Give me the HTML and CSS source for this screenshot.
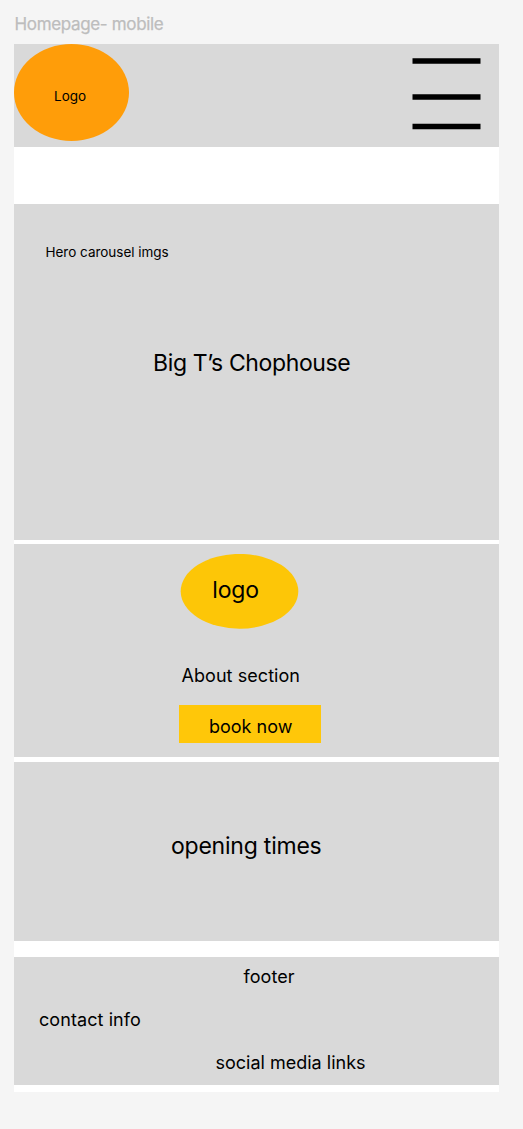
FILE: index.html
```html
<!DOCTYPE html>
<html lang="en">
<head>
<meta charset="utf-8">
<title>Homepage - mobile</title>
<link rel="stylesheet" href="styles.css">
</head>
<body>
<div class="frame-label">Homepage- mobile</div>
<main class="frame">
  <header class="header">
    <div class="logo"><span>Logo</span></div>
    <svg class="menu" width="69" height="74" viewBox="0 0 69 74"><path d="M0.5 3H68.5M0.5 39H68.5M0.5 68.5H68.5" stroke="#000" stroke-width="5.5"/></svg>
  </header>
  <section class="hero">
    <p class="hero-note">Hero carousel imgs</p>
    <h1 class="hero-title">Big T’s Chophouse</h1>
  </section>
  <section class="about">
    <svg class="badge" width="119" height="76" viewBox="0 0 119 76"><ellipse cx="59.5" cy="37.3" rx="58.8" ry="37.4" fill="#fdc607"/><text class="badge-text" x="32.3" y="44">logo</text></svg>
    <p class="about-text">About section</p>
    <button class="book"><span>book now</span></button>
  </section>
  <section class="times"><h2 class="times-title">opening times</h2></section>
  <footer class="footer">
    <p class="footer-title">footer</p>
    <p class="contact">contact info</p>
    <p class="social">social media links</p>
  </footer>
</main>
</body>
</html>
```
FILE: styles.css
```css
* { box-sizing: border-box; margin: 0; padding: 0; }
body { background: #f5f5f5; color: #000; font-family: Inter, sans-serif; padding: 13px 24px 37px 14px; height: 1129px; }
p, h1, h2, span { font-weight: 400; white-space: nowrap; }
.frame-label { height: 31px; padding-left: 0.5px; font-size: 17px; line-height: 23px; letter-spacing: -0.34px; color: #bdbdbd; -webkit-text-stroke: 0.25px #bdbdbd; }
.frame { width: 485px; height: 1048px; background: #fff; }
.header, .hero, .about, .times, .footer { background: #d9d9d9; }
.header { display: flex; justify-content: space-between; height: 103px; margin-bottom: 57px; }
.logo { width: 115px; height: 97px; border-radius: 50%; background: #ff9d09; padding: 43px 0 0 40px; font-size: 13.5px; line-height: 18px; }
.menu { margin: 14px 18px 0 0; }
.hero { height: 336px; margin-bottom: 4px; padding: 39px 0 0 31.5px; }
.hero-note { font-size: 13.5px; line-height: 18px; letter-spacing: -0.02px; }
.hero-title { font-size: 23px; line-height: 30px; letter-spacing: -0.37px; margin: 87px 0 0 107.5px; }
.about { height: 213px; margin-bottom: 5px; padding: 10px 0 0 165px; }
.badge { display: block; margin-left: 1px; }
.badge-text { font: 23px Inter, sans-serif; letter-spacing: -0.2px; }
.about-text { font-size: 18px; line-height: 24px; letter-spacing: 0.06px; margin: 34px 0 17px 2.5px; }
.book { display: flex; align-items: flex-start; width: 142px; height: 38px; border: 0; background: #ffc709; color: #000; font: 18px/24px Inter, sans-serif; padding: 10px 0 0 30px; text-align: left; }
.times { height: 179px; margin-bottom: 16px; padding: 69px 0 0 157px; }
.times-title { font-size: 23px; line-height: 30px; letter-spacing: -0.22px; }
.footer { height: 128px; padding-top: 8px; font-size: 18px; line-height: 24px; }
.footer-title { margin-left: 229.5px; letter-spacing: 0.08px; }
.contact { margin: 19px 0 19px 25px; letter-spacing: 0.08px; }
.social { margin-left: 201.5px; }
```
